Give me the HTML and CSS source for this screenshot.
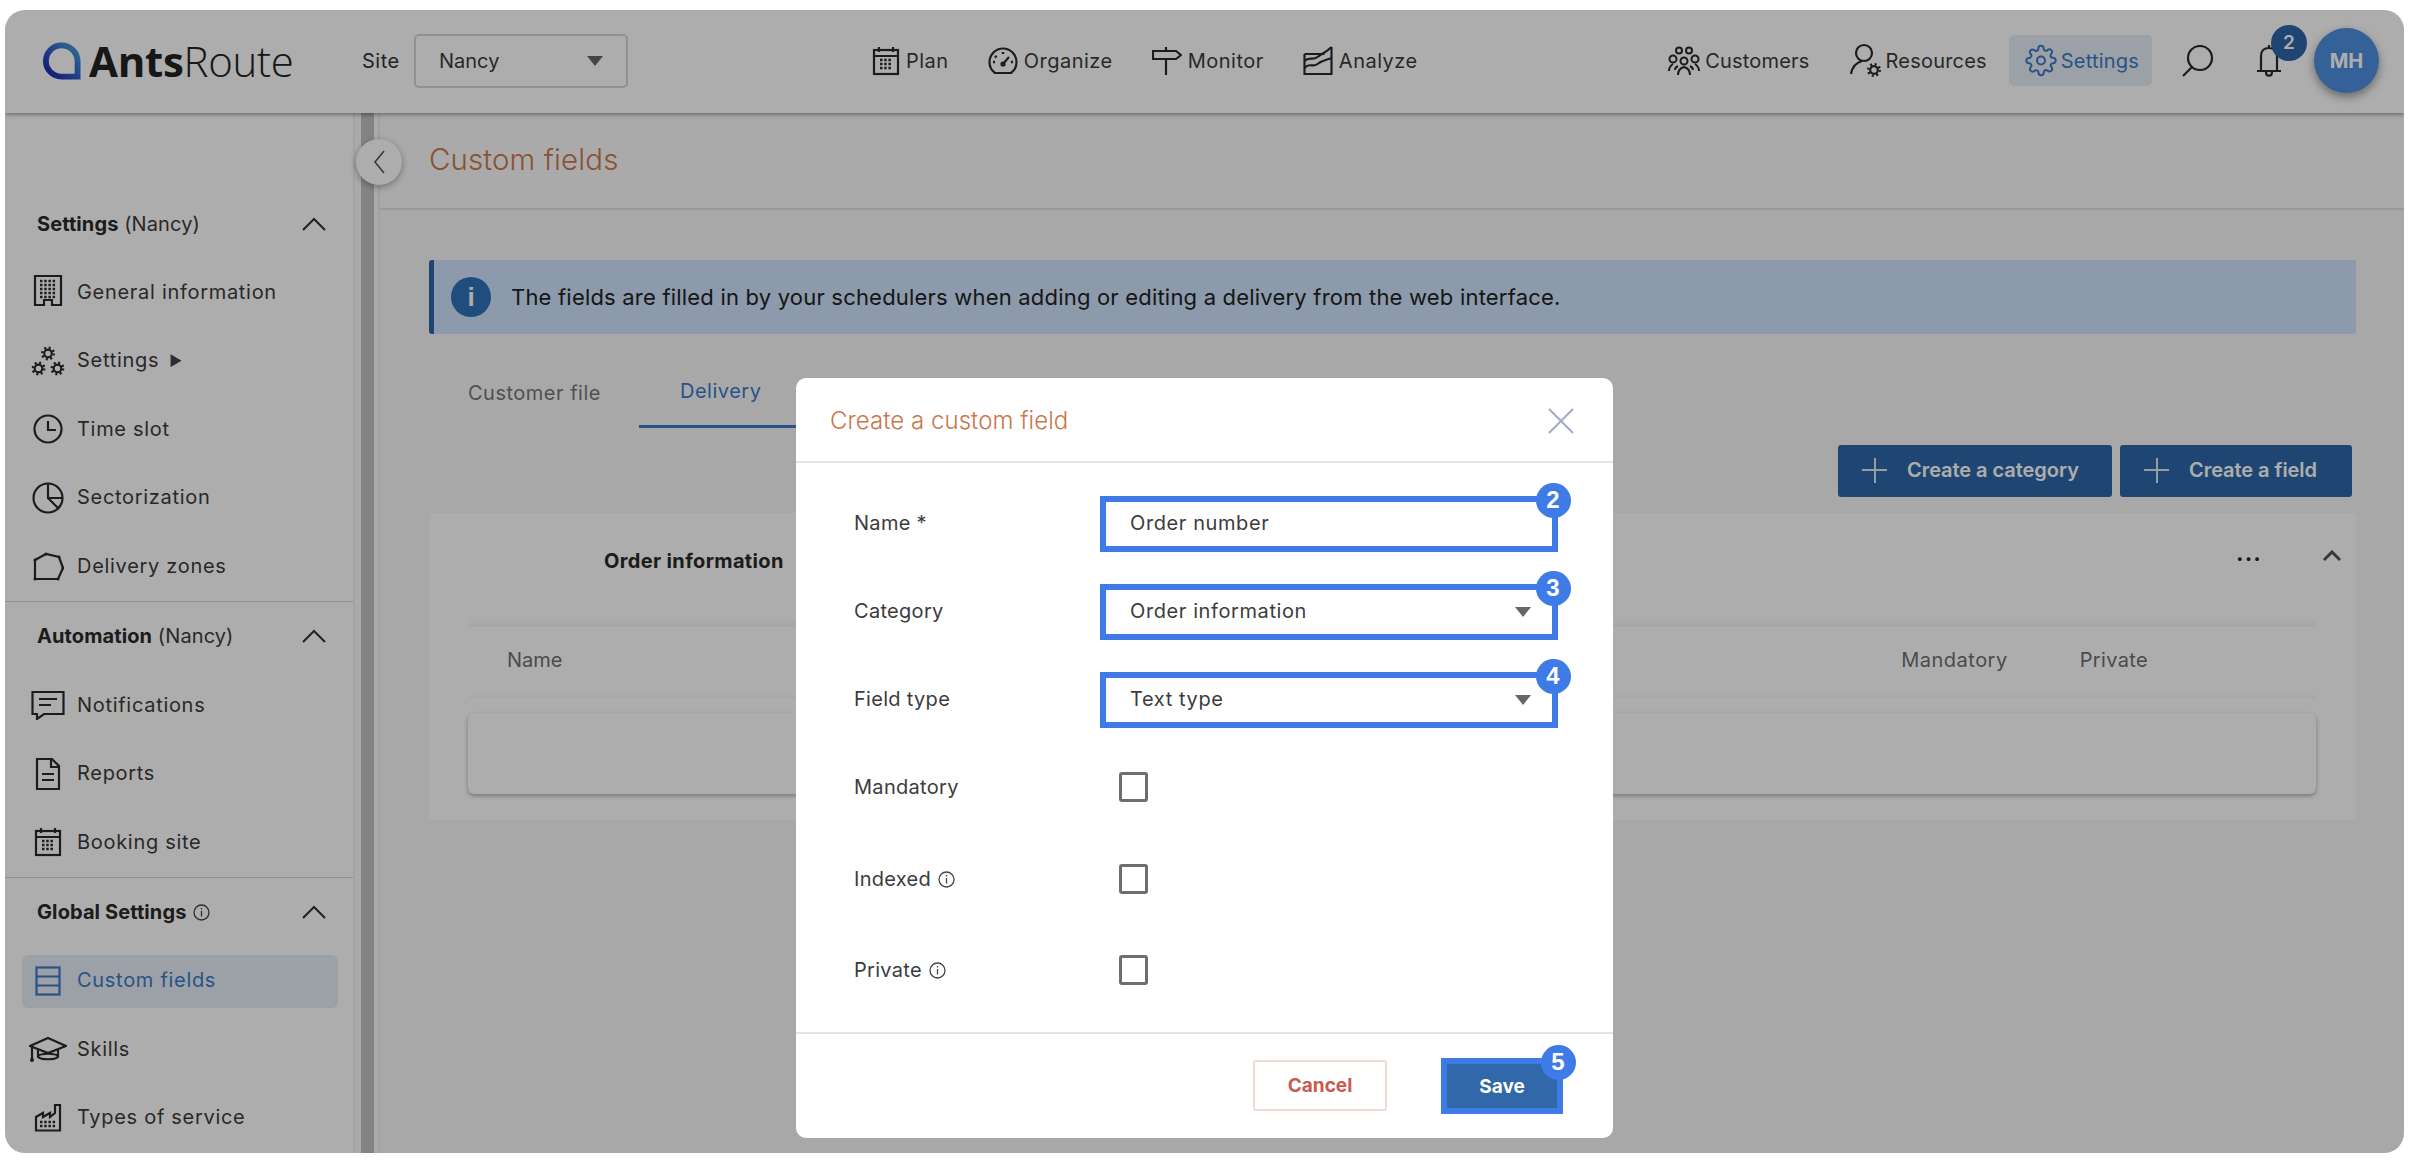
FILE: index.html
```html
<!DOCTYPE html>
<html lang="en">
<head>
<meta charset="utf-8">
<title>AntsRoute - Custom fields</title>
<link rel="stylesheet" href="styles.css">
</head>
<body>
<div class="frame">
  <header class="topbar">
    <div class="logo">
      <svg class="logo-mark" viewBox="0 0 40 40" width="39" height="40"><defs><linearGradient id="lg" x1="0" y1="1" x2="1" y2="0"><stop offset="0" stop-color="#1a1fb0"/><stop offset="1" stop-color="#4aa0dc"/></linearGradient></defs><path d="M20 4a15.500 15.500 0 0 0 0 32h16.500V20A16.500 16.500 0 0 0 20 4z" fill="none" stroke="url(#lg)" stroke-width="6"/></svg>
      <span class="logo-text"><b>Ants</b>Route</span>
    </div>
    <span class="site-label">Site</span>
    <div class="site-select"><span>Nancy</span><i class="caret"></i></div>
    <nav class="nav-main">
      <a class="nav-item"><svg class="ic" width="28" height="30" viewBox="0 0 28 30"><rect x="2" y="4" width="24" height="24"/><path d="M2 10h24M7 1v5M21 1v5"/><path class="dots" d="M8 14h12M8 18h12M8 22h12"/></svg>Plan</a>
      <a class="nav-item"><svg class="ic" width="30" height="28" viewBox="0 0 30 28"><path d="M7 26C3 23 1.500 19 1.500 15A13.500 13.500 0 0 1 28.500 15C28.500 19 27 23 23 26z"/><path d="M15 17l6-7"/><circle cx="15" cy="17" r="1.500"/><path class="dots" d="M5 15h2M7 9l1.500 1.500M15 5v2M23 15h2"/></svg>Organize</a>
      <a class="nav-item"><svg class="ic" width="30" height="30" viewBox="0 0 30 30"><path d="M1 5h23l5 4-5 4H1z"/><path d="M14 1v4M14 13v16"/></svg>Monitor</a>
      <a class="nav-item"><svg class="ic" width="30" height="30" viewBox="0 0 30 30"><path d="M1.500 8h20M1.500 8v20h27V1"/><path d="M1.500 15c5-5 8 0 13-4s8-4 14-10"/><path d="M1.500 22c5-6 8 0 13-4s9-4 14-6"/></svg>Analyze</a>
    </nav>
    <nav class="nav-right">
      <a class="nav-item"><svg class="ic thin" width="34" height="30" viewBox="0 0 34 30"><circle cx="12" cy="4.500" r="3"/><circle cx="22" cy="4.500" r="3"/><circle cx="6" cy="13" r="3.500"/><circle cx="17" cy="15" r="3.500"/><circle cx="28" cy="13" r="3.500"/><path d="M2 25c0-3 1-5 4-7M11 20c-2 1-3 2-3 4M23 20c2 1 3 2 3 4M32 25c0-3-1-5-4-7M11 29c0-4 2-7 6-8 4 1 6 4 6 8"/></svg>Customers</a>
      <a class="nav-item"><svg class="ic" width="32" height="36" viewBox="0 0 32 36"><circle cx="14" cy="10" r="8"/><path d="M12 18C5 20 2 25 1 31"/><circle cx="24" cy="27" r="3.800"/><circle class="teeth" cx="24" cy="27" r="5.800"/></svg>Resources</a>
      <a class="nav-item active"><svg class="ic blue" width="32" height="33" viewBox="0 0 24 24"><path d="M12 15a3 3 0 1 0 0-6 3 3 0 0 0 0 6z"/><path d="M19.400 15a1.650 1.650 0 0 0 .33 1.820l.06.06a2 2 0 0 1 0 2.830 2 2 0 0 1-2.830 0l-.06-.06a1.650 1.650 0 0 0-1.820-.33 1.650 1.650 0 0 0-1 1.510V21a2 2 0 0 1-2 2 2 2 0 0 1-2-2v-.09A1.650 1.650 0 0 0 9 19.400a1.650 1.650 0 0 0-1.820.33l-.06.06a2 2 0 0 1-2.830 0 2 2 0 0 1 0-2.830l.06-.06a1.650 1.650 0 0 0 .33-1.820 1.650 1.650 0 0 0-1.510-1H3a2 2 0 0 1-2-2 2 2 0 0 1 2-2h.09A1.650 1.650 0 0 0 4.600 9a1.650 1.650 0 0 0-.33-1.820l-.06-.06a2 2 0 0 1 0-2.830 2 2 0 0 1 2.830 0l.06.06a1.650 1.650 0 0 0 1.820.33H9a1.650 1.650 0 0 0 1-1.510V3a2 2 0 0 1 2-2 2 2 0 0 1 2 2v.09a1.650 1.650 0 0 0 1 1.510 1.650 1.650 0 0 0 1.820-.33l.06-.06a2 2 0 0 1 2.830 0 2 2 0 0 1 0 2.830l-.06.06a1.650 1.650 0 0 0-.33 1.820V9a1.650 1.650 0 0 0 1.510 1H21a2 2 0 0 1 2 2 2 2 0 0 1-2 2h-.09a1.650 1.650 0 0 0-1.510 1z"/></svg>Settings</a>
      <svg class="ic search" width="32" height="32" viewBox="0 0 32 32"><ellipse cx="18" cy="13" rx="12" ry="12"/><path d="M10 22L1 31"/></svg>
      <div class="bell-wrap">
        <svg class="ic" width="26" height="34" viewBox="0 0 26 34"><path d="M13 1v3M5 27V12c0-5 3-8 8-8s8 3 8 8v15M1 27h24"/><path d="M10 28c0 5 6 5 6 0"/></svg>
        <span class="notif">2</span>
      </div>
      <div class="avatar">MH</div>
    </nav>
  </header>

  <div class="body">
    <aside class="sidebar">
      <section class="group">
        <div class="group-head"><span><b>Settings</b> (Nancy)</span><svg class="chev" width="24" height="14" viewBox="0 0 24 14"><path d="M1 13L12 2l11 11"/></svg></div>
        <a class="side-item"><svg class="ic" width="30" height="34" viewBox="0 0 30 34"><path d="M2 1h26v29h-9v-5h-8v5H2z"/><path class="dots" d="M7 6h16M7 10h16M7 14h16M7 18h16M7 22h16"/></svg>General information</a>
        <a class="side-item"><svg class="ic" width="33" height="30" viewBox="0 0 33 30"><g><circle cx="16.500" cy="7.500" r="3.800"/><circle class="teeth" cx="16.500" cy="7.500" r="5.800"/></g><g><circle cx="7" cy="22.500" r="3.800"/><circle class="teeth" cx="7" cy="22.500" r="5.800"/></g><g><circle cx="26" cy="22.500" r="3.800"/><circle class="teeth" cx="26" cy="22.500" r="5.800"/></g></svg>Settings<span class="tri">▶</span></a>
        <a class="side-item"><svg class="ic" width="30" height="30" viewBox="0 0 30 30"><circle cx="15" cy="15" r="13.500"/><path d="M15 7v9h8"/></svg>Time slot</a>
        <a class="side-item"><svg class="ic" width="32" height="32" viewBox="0 0 32 32"><circle cx="16" cy="16" r="14.500"/><path d="M16 2v14h14M16 16l11 11"/></svg>Sectorization</a>
        <a class="side-item"><svg class="ic" width="32" height="32" viewBox="0 0 32 32"><path d="M3 9L14 3l13 3 4 11-5 11H3z"/><g class="nodes"><circle cx="3" cy="9" r="1.500"/><circle cx="14" cy="3" r="1.500"/><circle cx="27" cy="6" r="1.500"/><circle cx="31" cy="17" r="1.500"/><circle cx="26" cy="28" r="1.500"/><circle cx="3" cy="28" r="1.500"/></g></svg>Delivery zones</a>
      </section>
      <section class="group">
        <div class="group-head"><span><b>Automation</b> (Nancy)</span><svg class="chev" width="24" height="14" viewBox="0 0 24 14"><path d="M1 13L12 2l11 11"/></svg></div>
        <a class="side-item"><svg class="ic wide" width="34" height="30" viewBox="0 0 34 30"><path d="M1.500 2h31v22H13l-7 5v-5H1.500z"/><path d="M8 9h18M8 15h12"/></svg>Notifications</a>
        <a class="side-item"><svg class="ic" width="26" height="34" viewBox="0 0 26 34"><path d="M2 2h15l7 7v23H2z"/><path d="M16 2v8h8M7 17h12M7 23h12"/></svg>Reports</a>
        <a class="side-item"><svg class="ic" width="28" height="30" viewBox="0 0 28 30"><rect x="2" y="4" width="24" height="24"/><path d="M2 10h24M7 1v5M21 1v5"/><path class="dots" d="M8 14h12M8 18h12M8 22h12"/></svg>Booking site</a>
      </section>
      <section class="group">
        <div class="group-head"><span><b>Global Settings</b><svg class="info" width="17" height="17" viewBox="0 0 17 17"><circle cx="8.500" cy="8.500" r="7.500"/><path d="M8.500 7v5.500M8.500 4v1.500"/></svg></span><svg class="chev" width="24" height="14" viewBox="0 0 24 14"><path d="M1 13L12 2l11 11"/></svg></div>
        <a class="side-item current"><svg class="ic blue" width="26" height="30" viewBox="0 0 26 30"><rect x="1.500" y="1.500" width="23" height="27"/><path d="M1.500 10.500h23M1.500 19.500h23"/></svg>Custom fields</a>
        <a class="side-item"><svg class="ic" width="38" height="28" viewBox="0 0 38 28"><path d="M19 2L37 10l-18 7L1 10z"/><path d="M9 13v8c3 3 17 3 20 0v-8M9 20c3-3 17-3 20 0"/><path d="M3 11v12"/><circle cx="3" cy="24" r="2" class="solid"/></svg>Skills</a>
        <a class="side-item"><svg class="ic" width="28" height="28" viewBox="0 0 28 28"><path d="M2 26.500V13l7-4v4l7-4v4l5-4V1h5v25.500z"/><path class="dots" d="M6 18h16M6 22h16"/></svg>Types of service</a>
      </section>
    </aside>
    <div class="gutter"><div class="thumb"></div></div>
    <button class="collapse"><svg width="14" height="26" viewBox="0 0 14 26"><path d="M12 2L3 13l9 11"/></svg></button>

    <main class="content">
      <div class="page-head"><h1>Custom fields</h1></div>
      <div class="banner">
        <span class="banner-i">i</span>
        <p>The fields are filled in by your schedulers when adding or editing a delivery from the web interface.</p>
      </div>
      <div class="tabs">
        <a class="tab">Customer file</a>
        <a class="tab selected">Delivery</a>
      </div>
      <div class="actions">
        <button class="btn btn-cat"><span class="plus"></span>Create a category</button>
        <button class="btn btn-field"><span class="plus"></span>Create a field</button>
      </div>
      <section class="card">
        <div class="card-head">
          <strong>Order information</strong>
          <span class="more">...</span>
          <svg class="card-chev" width="20" height="12" viewBox="0 0 20 12"><path d="M2 10l8-8 8 8"/></svg>
        </div>
        <div class="band"></div>
        <div class="table-head"><span>Name</span><span class="th-mand">Mandatory</span><span class="th-priv">Private</span></div>
        <div class="band thin"></div>
        <div class="row-card"></div>
      </section>
    </main>
  </div>

  <div class="overlay"></div>
  <div class="modal">
    <div class="modal-head">
      <h2>Create a custom field</h2>
      <svg class="close" width="26" height="26" viewBox="0 0 26 26"><path d="M1 1l24 24M25 1L1 25"/></svg>
    </div>
    <form class="modal-body">
      <div class="field"><label>Name *</label><div class="input mark">Order number<span class="step">2</span></div></div>
      <div class="field"><label>Category</label><div class="input mark">Order information<i class="caret"></i><span class="step">3</span></div></div>
      <div class="field"><label>Field type</label><div class="input mark">Text type<i class="caret"></i><span class="step">4</span></div></div>
      <div class="field check"><label>Mandatory</label><span class="box"></span></div>
      <div class="field check"><label>Indexed<svg class="info" width="17" height="17" viewBox="0 0 17 17"><circle cx="8.500" cy="8.500" r="7.500"/><path d="M8.500 7v5.500M8.500 4v1.500"/></svg></label><span class="box"></span></div>
      <div class="field check"><label>Private<svg class="info" width="17" height="17" viewBox="0 0 17 17"><circle cx="8.500" cy="8.500" r="7.500"/><path d="M8.500 7v5.500M8.500 4v1.500"/></svg></label><span class="box"></span></div>
    </form>
    <div class="modal-foot">
      <button class="cancel">Cancel</button>
      <button class="save">Save<span class="step">5</span></button>
    </div>
  </div>
</div>
</body>
</html>
```
FILE: styles.css
```css
* { box-sizing: border-box; }
html, body { margin: 0; height: 100%; background: #fff; }
body {
  padding: 10px 6px 8px 5px;
  font-family: Inter, "Noto Sans", sans-serif;
  font-size: 20px;
  color: #3c3c3c;
  overflow: hidden;
}
a { color: inherit; text-decoration: none; }
.frame {
  position: relative;
  width: 2399px;
  height: 1143px;
  border-radius: 20px;
  overflow: hidden;
  background: #f8f8f8;
  display: flex;
  flex-direction: column;
}
.ic { fill: none; stroke: #2a2a2a; stroke-width: 2.2; flex: none; }
.ic.thin { stroke-width: 2; }
.ic.blue { stroke: #3a7bc8; stroke-width: 1.500; }
.current .ic.blue { stroke-width: 2.200; }
.ic .dots { stroke-width: 2.500; stroke-dasharray: 2.500 1.700; }
.ic .teeth { stroke-width: 2.400; stroke-dasharray: 2 2.550; }
.ic .solid, .ic .nodes { fill: #2a2a2a; stroke: none; }

/* top bar */
.topbar {
  flex: none;
  height: 103px;
  background: #fff;
  display: flex;
  align-items: center;
  padding: 0 25px 2px 37px;
  position: relative;
  z-index: 2;
  box-shadow: 0 2px 4px rgba(0,0,0,.35);
}
.logo { display: flex; align-items: center; gap: 8px; width: 246px; flex: none; }
.logo-mark { flex: none; }
.logo-text { font-family: "Open Sans", sans-serif; font-weight: 300; font-size: 42px; letter-spacing: -.3px; line-height: 1; color: #222; }
.logo-text b { font-weight: 700; }
.site-label { margin-left: 74px; width: 52px; flex: none; color: #333; letter-spacing: .5px; }
.site-select {
  width: 214px; height: 54px; flex: none;
  border: 2px solid #d6d6d6; border-radius: 5px;
  display: flex; align-items: center; justify-content: space-between;
  padding: 0 23px 0 23px;
}
.caret { width: 0; height: 0; border: 8px solid transparent; border-top: 10px solid #666; border-bottom: 0; display: block; flex: none; }
.nav-main { display: flex; align-items: center; gap: 39px; margin-left: 244px; }
.nav-main .nav-item { letter-spacing: .5px; gap: 6px; }
.nav-right { display: flex; align-items: center; margin-left: auto; }
.nav-item { display: flex; align-items: center; gap: 4px; letter-spacing: .2px; white-space: nowrap; }
.nav-right .nav-item + .nav-item { margin-left: 40px; }
.nav-right .nav-item.active {
  margin-left: 22px; height: 51px; padding: 0 13px 0 16px; background: #e6edf6; border-radius: 5px; color: #3a7bc8;
}
.search { margin-left: 30px; }
.bell-wrap { position: relative; margin-left: 42px; width: 26px; height: 34px; }
.notif {
  position: absolute; left: 15px; top: -19px; width: 36px; height: 36px; border-radius: 50%;
  background: #2e67a9; color: #fff; font-weight: 600; font-size: 19px;
  display: flex; align-items: center; justify-content: center;
}
.avatar {
  width: 65px; height: 65px; border-radius: 50%; margin-left: 32px;
  background: #4d8fe0; color: #fff; font-weight: 700; font-size: 20px;
  display: flex; align-items: center; justify-content: center;
  box-shadow: 0 4px 10px rgba(0,0,0,.4); position: relative; z-index: 1;
}

/* body */
.body { flex: 1; display: flex; position: relative; min-height: 0; }
.sidebar {
  flex: none; width: 350px; background: #fff; border-right: 2px solid #f0f0f0;
  padding-top: 76px;
}
.group + .group { border-top: 1px solid #d4d4d4; }
.group-head {
  height: 69px; display: flex; align-items: center; justify-content: space-between;
  padding: 0 27px 0 32px; letter-spacing: .1px;
}
.group-head b { font-weight: 700; color: #2a2a2a; }
.chev { fill: none; stroke: #333; stroke-width: 2; }
.info { fill: none; stroke: #444; stroke-width: 1.300; margin-left: 7px; vertical-align: -2px; }
.side-item {
  height: 68.600px; display: flex; align-items: center; position: relative;
  letter-spacing: .7px; margin: 0 15px 0 17px; padding: 0 0 1.500px 55px;
}
.side-item .ic { position: absolute; left: 26px; top: 50%; transform: translate(-50%,-50%); }
.tri { font-size: 14px; margin-left: 10px; color: #444; }
.side-item.current { color: #3a7bc8; background: #e6edf6; border-radius: 6px; height: 53px; margin-top: 7.800px; margin-bottom: 7.800px; }
.gutter { flex: none; width: 25px; background: #fbfbfb; padding: 0 6px; border-right: 2px solid #ececec; }
.thumb { height: 100%; background: #c3c3c3; width: 13px; }
.collapse {
  position: absolute; left: 351px; top: 26px; width: 46px; height: 46px; border-radius: 50%; border: 0; padding: 0;
  background: #fff; display: flex; align-items: center; justify-content: center;
  box-shadow: 0 2px 7px rgba(0,0,0,.35); z-index: 1;
}
.collapse svg { fill: none; stroke: #555; stroke-width: 1.600; }

/* content */
.content { flex: 1; min-width: 0; }
.page-head { height: 97px; border-bottom: 2px solid #e2e2e2; padding: 0 0 3px 49px; display: flex; align-items: center; background: #fbfbfb; }
.page-head h1 { margin: 0; font-weight: 300; font-size: 29.500px; color: #cc7a4c; letter-spacing: .1px; }
.banner {
  margin: 50px 48px 0 49px; height: 74px; background: #cee4fe; border-left: 5px solid #2e67a9; border-radius: 3px;
  display: flex; align-items: center; padding-left: 17px;
}
.banner-i {
  width: 40px; height: 40px; border-radius: 50%; background: #2e72b8; color: #fff; flex: none;
  display: flex; align-items: center; justify-content: center; font: 700 26px "Liberation Sans", sans-serif;
}
.banner p { margin: 0 0 0 20px; font-size: 22px; color: #222; letter-spacing: .2px; }
.tabs { display: flex; margin: 28px 0 0 49px; height: 66px; align-items: stretch; }
.tab { padding: 0 0 5px 39px; width: 208px; display: flex; align-items: center; color: #777; letter-spacing: .5px; }
.tab.selected { color: #3a7bc8; padding-left: 41px; width: 157px; margin-left: 2px; border-bottom: 3px solid #3a7bc8; }
.actions { display: flex; justify-content: flex-end; gap: 8px; margin: 17px 52px 0 0; }
.btn {
  height: 52px; border: 0; border-radius: 3px; background: #2e67a9; color: #fff;
  font: 600 20px Inter, sans-serif; letter-spacing: -.05px; display: flex; align-items: center; padding: 0 0 2px;
}
.btn-cat { width: 274px; padding-left: 24px; }
.btn-field { width: 232px; padding-left: 24px; }
.plus { width: 25px; height: 25px; margin-right: 20px; position: relative; flex: none;
  background: linear-gradient(#fff,#fff) center/2px 100% no-repeat, linear-gradient(#fff,#fff) center/100% 2px no-repeat; opacity: .85; }
.card { margin: 16px 48px 0 49px; height: 307px; background: #fff; border-radius: 4px; overflow: hidden; padding: 0 40px; position: relative; }
.card-head { height: 104px; padding-top: 30px; display: flex; align-items: flex-start; line-height: 36px; margin: 0 -40px; padding-left: 175px; padding-right: 14px; }
.card-head strong { font-weight: 700; color: #2a2a2a; letter-spacing: .35px; }
.more { margin-left: auto; font-weight: 800; letter-spacing: 1.500px; line-height: 22px; margin-right: 60px; color: #222; }
.card-chev { fill: none; stroke: #555; stroke-width: 3; margin-top: 7px; }
.band { height: 10px; background: linear-gradient(#fff,#f6f6f6); }
.band.thin { height: 5px; }
.table-head { height: 66px; display: flex; align-items: center; padding-left: 38px; color: #6f6f6f; }
.th-mand { margin-left: auto; letter-spacing: .5px; }
.th-priv { margin-left: 72px; margin-right: 168px; letter-spacing: .35px; }
.row-card { margin: 15px 0 0 -1px; height: 81px; background: #fff; border-radius: 6px; box-shadow: 0 2px 4px rgba(0,0,0,.3); }

/* modal */
.overlay { position: absolute; inset: 0; background: rgba(0,0,0,.32); z-index: 5; }
.modal {
  position: absolute; left: 791px; top: 368px; width: 817px; height: 760px; background: #fff; border-radius: 10px; z-index: 6;
  display: flex; flex-direction: column;
}
.modal-head { height: 85px; flex: none; border-bottom: 2px solid #e4e4e4; display: flex; align-items: center; justify-content: space-between; padding: 2px 39px 0 34px; }
.modal-head h2 { margin: 0; font-weight: 300; font-size: 24px; color: #c9764a; letter-spacing: .05px; }
.close { fill: none; stroke: #a3a9c6; stroke-width: 2; }
.modal-body { flex: 1; min-height: 0; padding: 33px 0 0 58px; }
.field { display: flex; align-items: center; height: 56px; margin-bottom: 32px; }
.field label { width: 246px; flex: none; letter-spacing: .3px; padding-bottom: 3px; }
.field.check { height: 30px; margin-bottom: 61.500px; }
.field.check label { padding-bottom: 0; }
.field.check .box { margin-left: 19px; }
.field + .field.check { position: relative; top: 12px; }
.mark { border: 6px solid #3f7be7; }
.input { position: relative; width: 458px; height: 56px; display: flex; align-items: center; justify-content: space-between; padding: 0 21px 3px 24px; flex: none; letter-spacing: .6px; }
.input .caret { margin-top: 3px; }
.step {
  position: absolute; right: -18.500px; top: -19.500px; width: 35px; height: 35px; border-radius: 50%;
  background: #3f7be7; color: #fff; font: 700 24px "Liberation Sans", sans-serif; letter-spacing: 0;
  display: flex; align-items: center; justify-content: center;
}
.box { display: block; width: 29px; height: 30px; border: 3px solid #6e6e6e; border-radius: 3px; flex: none; }
.modal-foot { flex: none; height: 106px; border-top: 2px solid #e4e4e4; display: flex; align-items: flex-start; padding: 26px 0 0 457px; }
.cancel {
  width: 134px; height: 51px; background: #fff; border: 2px solid #f3d9d3; border-radius: 3px;
  color: #c85a50; font: 700 19px Inter, sans-serif; padding: 0;
}
.save {
  position: relative; width: 122px; height: 56px; margin: -2px 0 0 54px; background: #3068aa; border: 6px solid #3f7be7;
  color: #fff; font: 700 19px Inter, sans-serif; padding: 0;
}
```
